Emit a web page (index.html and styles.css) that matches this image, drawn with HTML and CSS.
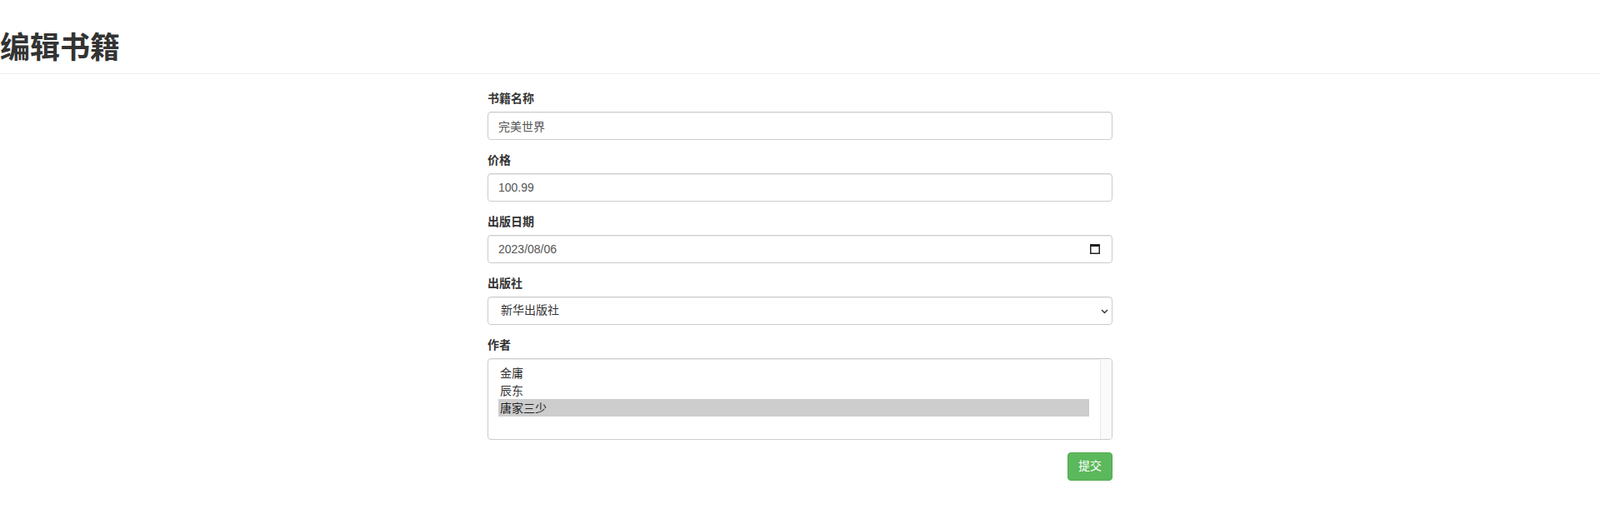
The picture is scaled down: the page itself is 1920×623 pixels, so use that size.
FILE: index.html
```html
<!DOCTYPE html>
<html lang="zh-CN">
<head>
<meta charset="utf-8">
<title>编辑书籍</title>
<link rel="stylesheet" href="styles.css">
</head>
<body>
<div class="page-header">
  <h1>编辑书籍</h1>
</div>
<form class="book-form">
  <div class="form-group">
    <label class="form-label">书籍名称</label>
    <input class="form-control" type="text" value="完美世界">
  </div>
  <div class="form-group">
    <label class="form-label">价格</label>
    <input class="form-control" type="text" value="100.99">
  </div>
  <div class="form-group">
    <label class="form-label">出版日期</label>
    <div class="field-wrap">
      <input class="form-control" type="text" value="2023/08/06">
      <svg class="cal-icon" width="12" height="12" viewBox="0 0 12 12">
        <rect x="0.75" y="0.75" width="10.5" height="10.5" fill="none" stroke="#222" stroke-width="1.5"/>
        <rect x="0" y="0" width="12" height="3" fill="#222"/>
        <rect x="2.5" y="-1" width="1.3" height="2" fill="#222"/>
        <rect x="8.2" y="-1" width="1.3" height="2" fill="#222"/>
      </svg>
    </div>
  </div>
  <div class="form-group">
    <label class="form-label">出版社</label>
    <div class="field-wrap">
      <select class="form-control select-single">
        <option selected>新华出版社</option>
        <option>人民出版社</option>
      </select>
      <svg class="chevron" width="9" height="6" viewBox="0 0 9 6">
        <path d="M1 1 L4.5 4.5 L8 1" fill="none" stroke="#333" stroke-width="1.4"/>
      </svg>
    </div>
  </div>
  <div class="form-group">
    <label class="form-label">作者</label>
    <div class="field-wrap">
      <select class="form-control select-multi" multiple size="4">
        <option>金庸</option>
        <option>辰东</option>
        <option selected>唐家三少</option>
      </select>
      <div class="scroll-track"></div>
    </div>
  </div>
  <div class="actions">
    <button class="btn-success" type="button">提交</button>
  </div>
</form>
</body>
</html>
```

FILE: styles.css
```css
* { box-sizing: border-box; }

html, body {
  margin: 0;
  padding: 0;
  background: #fff;
}

body {
  font-family: "Liberation Sans", "Noto Sans CJK SC", sans-serif;
  font-size: 14px;
  line-height: 1.42857;
  color: #333;
}

.page-header {
  border-bottom: 1px solid #eee;
  margin-bottom: 20px;
}

.page-header h1 {
  margin: 38px 0 10px;
  font-size: 36px;
  line-height: 1.1;
  font-weight: 700;
  color: #333;
}

.book-form {
  width: 750px;
  margin: 0 auto;
}

.form-group {
  margin-bottom: 15px;
}

.form-label {
  display: block;
  font-weight: 700;
  margin-bottom: 5px;
  height: 20px;
}

.form-control {
  display: block;
  width: 100%;
  height: 34px;
  padding: 6px 12px;
  font-family: "Liberation Sans", "Noto Sans CJK SC", sans-serif;
  font-size: 14px;
  line-height: 1.42857;
  color: #555;
  background: #fff;
  border: 1px solid #ccc;
  border-radius: 4px;
  box-shadow: inset 0 1px 1px rgba(0,0,0,.075);
  outline: none;
}

.field-wrap {
  position: relative;
}

.cal-icon {
  position: absolute;
  right: 15px;
  top: 11px;
}

.select-single {
  appearance: none;
  -webkit-appearance: none;
  padding-left: 15px;
  color: #333;
}

.chevron {
  position: absolute;
  right: 5px;
  top: 15px;
  pointer-events: none;
}

.select-multi {
  height: 98px;
  padding: 6px 27px 6px 12px;
  color: #333;
}

.select-multi option {
  padding: 0 2px 1px;
  min-height: 21px;
}

.select-multi option:checked {
  background: linear-gradient(#cdcdcd, #cdcdcd);
  color: #222;
}

.scroll-track {
  position: absolute;
  top: 1px;
  right: 1px;
  bottom: 1px;
  width: 14px;
  background: #fafafa;
  border-left: 1px solid #e8e8e8;
  border-radius: 0 3px 3px 0;
}

.actions {
  display: flex;
  justify-content: flex-end;
}

.btn-success {
  height: 34px;
  padding: 6px 12px;
  font-family: "Liberation Sans", "Noto Sans CJK SC", sans-serif;
  font-size: 14px;
  line-height: 1.42857;
  color: #fff;
  background: #5cb85c;
  border: 1px solid #4cae4c;
  border-radius: 4px;
  cursor: pointer;
}
```
